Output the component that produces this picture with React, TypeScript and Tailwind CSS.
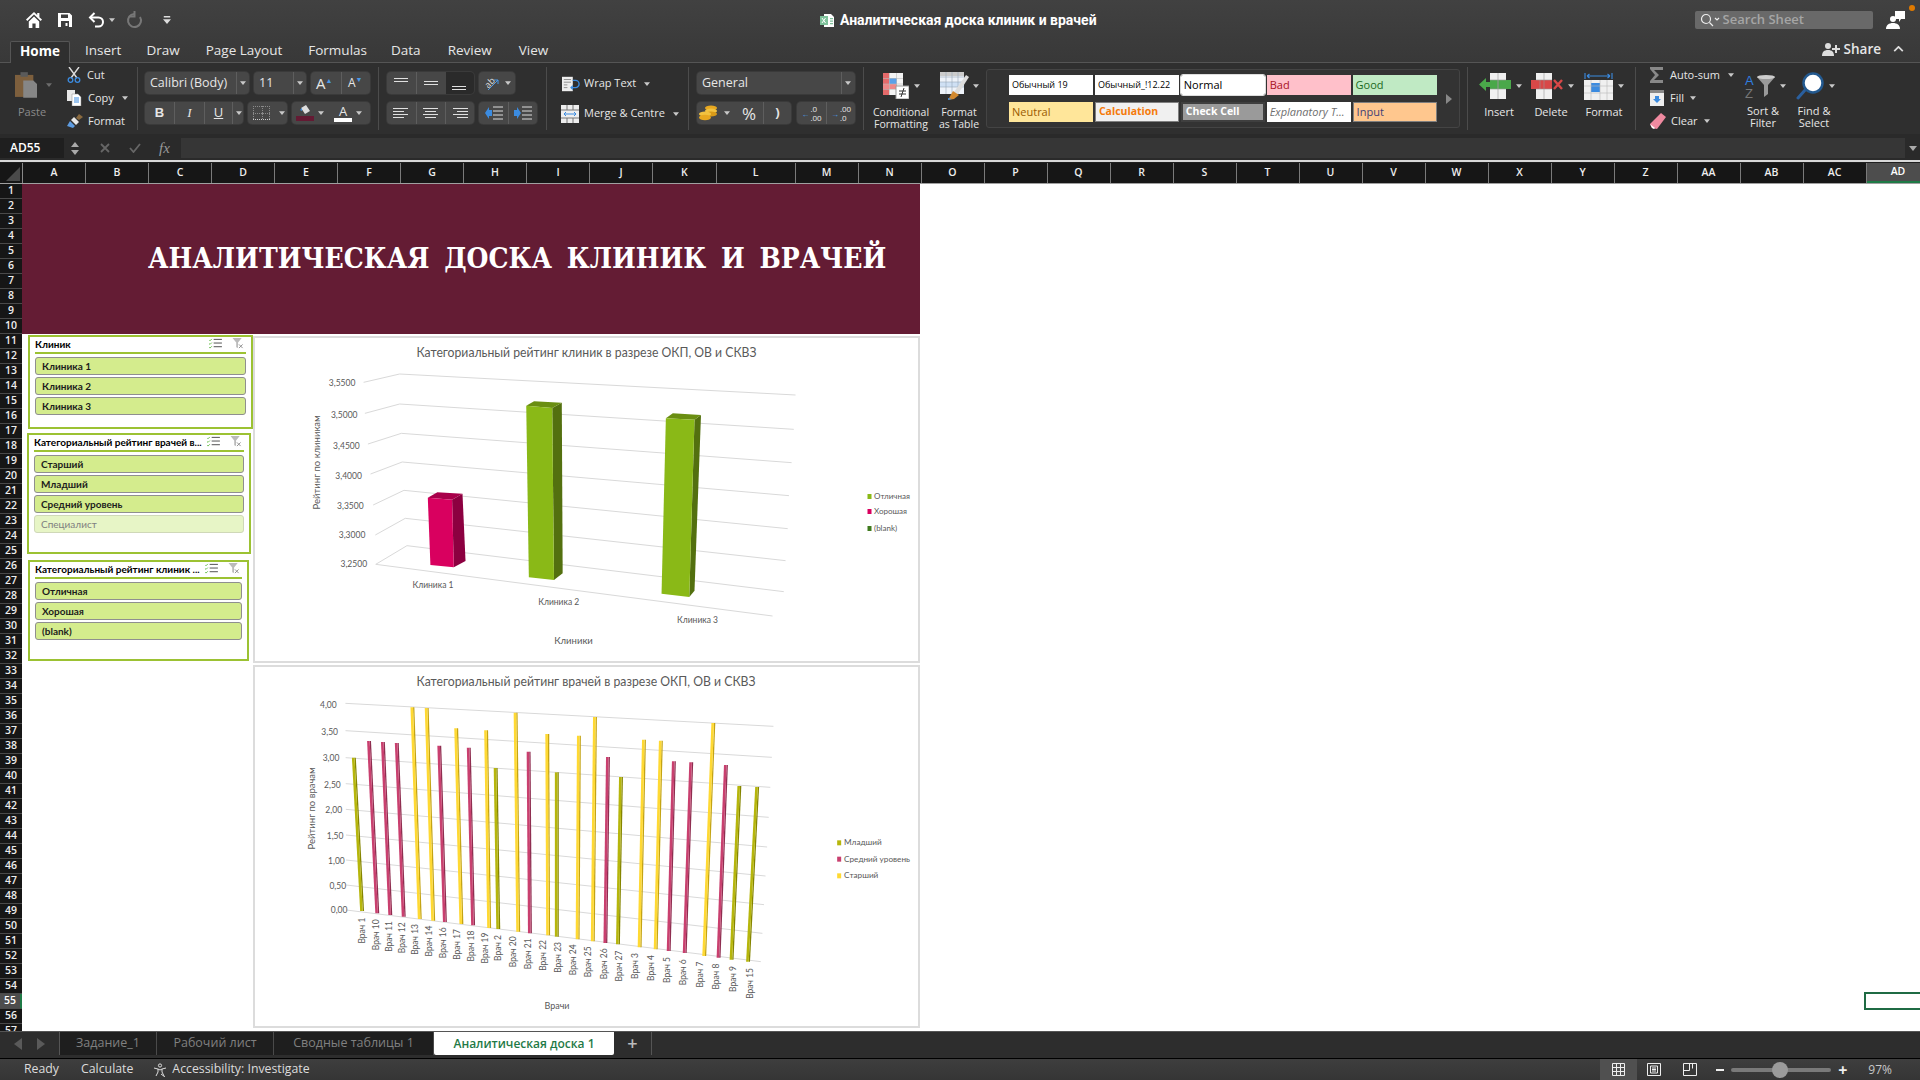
import React from "react";

const Caret = ({ className = "" }: { className?: string }) => (
  <svg viewBox="0 0 8 5" className={`h-[4px] w-[6px] shrink-0 ${className}`}>
    <path d="M0 0h8L4 5z" fill="#c8c8c8" />
  </svg>
);

const Sep = () => <div className="my-[4px] w-px shrink-0 bg-[#4c4c4c]" />;
const Div = () => <div className="h-full w-px shrink-0 bg-[#5e5e5e]" />;

const box = "flex h-[22px] items-center rounded-[4px] bg-[#474747] shadow-[0_0_0_1px_#3a3a3a]";

/* title bar icons */
const HomeIcon = () => (
  <svg viewBox="0 0 18 18" className="h-[18px] w-[18px]">
    <path d="M9 1 1 8.6l1.3 1.3L9 3.6l6.7 6.3L17 8.6l-2.6-2.4V2h-2.2v2.1z" fill="#fff" />
    <path d="M3.8 10.6 9 5.6l5.2 5V17h-3.6v-4.6H7.4V17H3.8z" fill="#fff" />
  </svg>
);
const SaveIcon = () => (
  <svg viewBox="0 0 16 16" className="h-[16px] w-[16px]">
    <path d="M1 1h11.5L15 3.5V15H1zM4 2.5V6h7V2.5zM4 9v6h8V9z" fill="#fff" fillRule="evenodd" />
    <path d="M8.5 11h2v3h-2z" fill="#fff" />
  </svg>
);
const UndoIcon = () => (
  <svg viewBox="0 0 18 18" className="h-[18px] w-[18px]" fill="none" stroke="#fff" strokeWidth="2">
    <path d="M2.5 6.5h8a4.5 4.5 0 0 1 0 9H7" />
    <path d="M6.5 2 2 6.5 6.5 11" />
  </svg>
);
const RedoIcon = () => (
  <svg viewBox="0 0 18 18" className="h-[18px] w-[18px]" fill="none" stroke="#777" strokeWidth="2">
    <path d="M8 3a6.500 6.500 0 1 0 6 3" />
    <path d="M8.500 0v5.500H3" />
  </svg>
);
const CustomizeIcon = () => (
  <svg viewBox="0 0 10 12" className="h-[12px] w-[8px]">
    <path d="M1 1h8v2H1zM0 5h10l-5 6z" fill="#ddd" />
  </svg>
);
const ExcelDoc = () => (
  <svg viewBox="0 0 15 15" className="h-[15px] w-[15px]">
    <path d="M4 1h7l3 3v10H4z" fill="#fff" />
    <path d="M0 3h8v9H0z" fill="#7fc29b" />
    <path d="M2 5l3.5 5M5.5 5 2 10" stroke="#fff" />
    <path d="M10 5h3v1.2h-3zM10 7.5h3v1.2h-3zM10 10h3v1.2h-3z" fill="#7fc29b" />
  </svg>
);
const SearchIcon = () => (
  <svg viewBox="0 0 20 14" className="h-[14px] w-[20px]" fill="none" stroke="#eee" strokeWidth="1.2">
    <circle cx="6" cy="6" r="4.5" />
    <path d="m9.5 9.5 3.5 3.5M15 5l2 2 2-2" />
  </svg>
);
const CommentsIcon = () => (
  <svg viewBox="0 0 20 20" className="h-[20px] w-[20px]">
    <path d="M9 1h10v8h-4l-2 3V9H9z" fill="#fff" />
    <circle cx="7" cy="9" r="3" fill="#fff" />
    <path d="M0 19c0-4 3-6 7-6s7 2 7 6z" fill="#fff" />
  </svg>
);
const ShareIcon = () => (
  <svg viewBox="0 0 18 14" className="h-[14px] w-[18px]">
    <circle cx="6" cy="4" r="3" fill="#ddd" />
    <path d="M0 14c0-4 2-6 6-6s6 2 6 6z" fill="#ddd" />
    <path d="M13 3h2v3h3v2h-3v3h-2V8h-3V6h3z" fill="#ddd" />
  </svg>
);

/* clipboard group */
const PasteIcon = () => (
  <svg viewBox="0 0 24 30" className="h-[30px] w-[24px]">
    <path d="M0 4h20v24H0z" fill="#7d5f3d" />
    <path d="M6 1h8v5H6z" fill="#5a5a5a" />
    <path d="M9 10h11l4 4v15H9z" fill="#868686" />
  </svg>
);
const CutIcon = () => (
  <svg viewBox="0 0 14 16" className="h-[16px] w-[14px]" fill="none">
    <path d="M2 0l8 11M12 0 4 11" stroke="#ddd" strokeWidth="1.4" />
    <circle cx="3.5" cy="13" r="2.3" stroke="#3b8be0" strokeWidth="1.3" />
    <circle cx="10.5" cy="13" r="2.3" stroke="#3b8be0" strokeWidth="1.3" />
  </svg>
);
const CopyIcon = () => (
  <svg viewBox="0 0 15 16" className="h-[16px] w-[15px]">
    <path d="M0 0h8v11H0z" fill="#e8e8e8" />
    <path d="M5 4h6l3 3v9H5z" fill="#fff" stroke="#888" strokeWidth=".5" />
    <path d="M7 8h5M7 10h5M7 12h5" stroke="#3b8be0" />
  </svg>
);
const BrushIcon = () => (
  <svg viewBox="0 0 16 14" className="h-[14px] w-[16px]">
    <path d="m9 4 3-4 4 3-4 3z" fill="#8a6a3f" />
    <path d="M7 3l5 5-3 3-5-5z" fill="#e8e8e8" />
    <path d="M3 7l5 5-2 2-6-2z" fill="#5d9be0" />
  </svg>
);

/* alignment lines */
const Lines = ({ w }: { w: number[] }) => (
  <div className="flex w-[16px] flex-col gap-[2px]">
    {w.map((v, i) => (
      <div key={i} className="h-px bg-[#e0e0e0]" style={{ width: v, marginLeft: 0 }} />
    ))}
  </div>
);
const CenterLines = ({ w, end }: { w: number[]; end?: boolean }) => (
  <div className={`flex w-[16px] flex-col gap-[2px] ${end ? "items-end" : "items-center"}`}>
    {w.map((v, i) => (
      <div key={i} className="h-px bg-[#e0e0e0]" style={{ width: v }} />
    ))}
  </div>
);
const IndentIcon = ({ flip }: { flip?: boolean }) => (
  <svg viewBox="0 0 18 14" className="h-[14px] w-[18px]">
    <path d="M8 1h10M8 5h10M8 9h10M8 13h10" stroke="#ddd" />
    <path d={flip ? "M0 4v6h3v3l4-6-4-6v3z" : "M7 4v6H4v3L0 7l4-6v3z"} fill="#3b8be0" />
  </svg>
);

const WrapIcon = () => (
  <svg viewBox="0 0 20 20" className="h-[18px] w-[20px]">
    <path d="M0 2h12v16H0z" fill="#eee" />
    <path d="M2 5h8M2 8h8M2 11h4M2 14h4" stroke="#888" />
    <path d="M12 6h3a3.5 3.5 0 0 1 0 8h-5" fill="none" stroke="#3b8be0" strokeWidth="1.5" />
    <path d="m12 11-3 3 3 3z" fill="#3b8be0" />
  </svg>
);
const MergeIcon = () => (
  <svg viewBox="0 0 18 18" className="h-[18px] w-[18px]">
    <path d="M0 0h18v18H0z" fill="#eee" />
    <path d="M0 5h18M0 13h18M6 0v5M12 0v5M6 13v5M12 13v5" stroke="#777" />
    <path d="M3 9h12M3 9l2-2M3 9l2 2M15 9l-2-2M15 9l-2 2" stroke="#3b8be0" fill="none" />
  </svg>
);
const CoinsIcon = () => (
  <svg viewBox="0 0 18 16" className="h-[16px] w-[18px]">
    <ellipse cx="12" cy="3" rx="6" ry="2.6" fill="#e8a820" />
    <ellipse cx="12" cy="6" rx="6" ry="2.6" fill="#f2c240" />
    <ellipse cx="12" cy="9" rx="6" ry="2.6" fill="#d89a18" />
    <ellipse cx="6" cy="9" rx="6" ry="2.6" fill="#f2c240" />
    <ellipse cx="6" cy="12.5" rx="6" ry="2.8" fill="#e8a820" />
  </svg>
);
const CondIcon = () => (
  <svg viewBox="0 0 26 26" className="h-[26px] w-[26px]">
    <path d="M0 0h20v22H0z" fill="#f4f4f4" />
    <path d="M0 0h6v22H0z" fill="#e46a6a" />
    <path d="M6 5h8v6H6z" fill="#5aa0e8" />
    <path d="M0 11h14v5H0z" fill="#e88" />
    <path d="M6.5 0v22M13.5 0v22M0 5.5h20M0 11h20M0 16.500h20" stroke="#bbb" strokeWidth=".6" />
    <path d="M13 13h13v13H13z" fill="#fff" stroke="#999" />
    <path d="M16 18h7M16 21h7M21 15l-3 9" stroke="#333" strokeWidth="1" />
  </svg>
);
const TableIcon = () => (
  <svg viewBox="0 0 30 28" className="h-[28px] w-[30px]">
    <path d="M0 0h24v22H0z" fill="#eef3fa" />
    <path d="M0 0h24v4H0z" fill="#ccc" />
    <path d="M0 10h24v5H0z" fill="#cfe0f4" />
    <path d="M6 0v22M12 0v22M18 0v22M0 5h24M0 10h24M0 15h24" stroke="#9ab" strokeWidth=".6" />
    <path d="m14 20 12-17 3 2-11 17z" fill="#ddd" />
    <path d="m13 19 6 4-5 4-6 1z" fill="#d2892f" />
    <path d="m8 26 4 1-4 1z" fill="#3b8be0" />
  </svg>
);
const InsertIcon = () => (
  <svg viewBox="0 0 32 26" className="h-[26px] w-[32px]">
    <path d="M11 0h16v26H11z" fill="#f0f0f0" />
    <path d="M11 7h21v9H11z" fill="#4aa84a" />
    <path d="M0 11.500 7 5v4h5v5H7v4z" fill="#4aa84a" />
    <path d="M19 0v26M11 7h16M11 16h16M19 7v9" stroke="#999" strokeWidth=".6" />
  </svg>
);
const DeleteIcon = () => (
  <svg viewBox="0 0 32 26" className="h-[26px] w-[32px]">
    <path d="M5 0h16v26H5z" fill="#f0f0f0" />
    <path d="M0 7h21v9H0z" fill="#d84848" />
    <path d="M13 0v26M5 7h16M5 16h16M9 7v9" stroke="#999" strokeWidth=".6" />
    <path d="m23 7 8 9M31 7l-8 9" stroke="#d84848" strokeWidth="2.4" />
  </svg>
);
const FormatIcon = () => (
  <svg viewBox="0 0 29 28" className="h-[28px] w-[29px]">
    <path d="M1 1v6M28 1v6M3 4h23M3 4l2.500-2M3 4l2.500 2M26 4l-2.500-2M26 4l-2.500 2" stroke="#3b8be0" strokeWidth="1.1" fill="none" />
    <path d="M0 8h29v20H0z" fill="#f0f0f0" />
    <path d="M7 11h9v9H7z" fill="#3b8be0" />
    <path d="M7 8v20M16 8v20M23 8v20M0 14h29M0 21h29" stroke="#bbb" strokeWidth=".6" />
  </svg>
);
const SigmaIcon = () => (
  <svg viewBox="0 0 14 16" className="h-[16px] w-[14px]">
    <path d="M0 0h13v3L4 3l5 5-5 5h9v3H0v-2l5-6-5-6z" fill="#888" />
  </svg>
);
const FillIcon = () => (
  <svg viewBox="0 0 14 16" className="h-[16px] w-[14px]">
    <path d="M0 0h14v16H0z" fill="#eee" />
    <path d="M0 0h14v3H0z" fill="#888" />
    <path d="M5 6h4v3h2l-4 4-4-4h2z" fill="#3b8be0" />
  </svg>
);
const EraserIcon = () => (
  <svg viewBox="0 0 16 16" className="h-[16px] w-[16px]">
    <path d="M11 0l5 4-9 12-5-1-2-4z" fill="#f08aa0" />
    <path d="M0 11l5 4-1 1-2-1z" fill="#fff" />
  </svg>
);
const FunnelIcon = () => (
  <svg viewBox="0 0 32 26" className="h-[26px] w-[32px] overflow-visible">
    <text x="0" y="12" fontSize="13" fill="#2f7ee0" fontFamily="Liberation Sans">A</text>
    <text x="0" y="25" fontSize="13" fill="#777" fontFamily="Liberation Sans">Z</text>
    <path d="M12 4h18l-7 8v9l-4 3V12z" fill="#9a9a9a" />
    <ellipse cx="21" cy="4" rx="9" ry="2" fill="#ccc" />
  </svg>
);
const LoupeIcon = () => (
  <svg viewBox="0 0 28 28" className="h-[28px] w-[28px]">
    <path d="M2 26 10 17" stroke="#2a5f9e" strokeWidth="3" strokeLinecap="round" />
    <circle cx="17" cy="11" r="9.500" fill="#fff" stroke="#23598f" strokeWidth="2.500" />
  </svg>
);

/* slicer icons */
const MultiIcon = () => (
  <svg viewBox="0 0 14 12" className="h-[11px] w-[13px]" fill="none">
    <path d="M0 2l1 1 2-2M0 6l1 1 2-2M0 10l1 1 2-2" stroke="#62bb46" />
    <path d="M5 1.500h9M5 5.500h9M5 9.500h9" stroke="#444" />
  </svg>
);
const ClearIcon = () => (
  <svg viewBox="0 0 13 12" className="h-[11px] w-[13px]">
    <path d="M0 0h10L6 5v6L4 10V5z" fill="#bbb" />
    <path d="M7 7l4 4M11 7l-4 4" stroke="#888" />
  </svg>
);

const chartFont = "font-['Lato','Liberation_Sans',sans-serif]";

type SlicerProps = {
  title: string;
  items: { label: string; off?: boolean }[];
  className: string;
};

const Slicer = ({ title, items, className }: SlicerProps) => (
  <div className={`border-2 border-[#9cc233] bg-white px-[5px] ${className} ${chartFont}`}>
    <div className="flex h-[17px] items-center justify-between border-b-2 border-[#9cc233] pb-[2px]">
      <span className="text-[10px] leading-none font-bold text-black">{title}</span>
      <div className="flex items-center gap-[10px] pr-[1px]">
        <MultiIcon />
        <ClearIcon />
      </div>
    </div>
    <div className="mt-[3px] flex flex-col gap-[2px]">
      {items.map((it) => (
        <div
          key={it.label}
          className={`flex h-[18px] items-center rounded-[3px] border pl-[6px] text-[10px] font-bold ${
            it.off
              ? "border-[#cfd8b8] bg-[#e7f5c6] font-normal text-[#808080]"
              : "border-[#8f8f8f] bg-[#d4ec8d] text-[#1c1c1c]"
          }`}
        >
          {it.label}
        </div>
      ))}
    </div>
  </div>
);

/* chart 1 */
const p1 = (pts: number[][]) => pts.map(([x, y]) => `${250 + x / 2.306},${330 + y / 3}`).join(" ");

const grid1 = [
  [[262, 157], [345, 132], [1258, 195]],
  [[265, 250], [345, 222], [1254, 298]],
  [[272, 342], [349, 310], [1249, 398]],
  [[278, 432], [351, 396], [1243, 497]],
  [[284, 525], [355, 481], [1240, 596]],
  [[289, 615], [358, 565], [1235, 692]],
  [[290, 703], [362, 647], [1231, 785]],
];
const ticks1 = [
  ["3,5500", 243, 158],
  ["3,5000", 248, 254],
  ["3,4500", 253, 347],
  ["3,4000", 258, 437],
  ["3,3500", 262, 527],
  ["3,3000", 266, 614],
  ["3,2500", 270, 702],
] as const;
const bars1 = [
  {
    c: ["#d9005f", "#8c0040", "#a8004a"],
    front: [[410, 503], [466, 509], [470, 712], [416, 705]],
    side: [[466, 509], [490, 491], [497, 693], [470, 712]],
    top: [[410, 503], [432, 487], [490, 491], [466, 509]],
  },
  {
    c: ["#8ab917", "#53700f", "#6a8e12"],
    front: [[637, 227], [697, 234], [701, 750], [643, 742]],
    side: [[697, 234], [719, 218], [721, 730], [701, 750]],
    top: [[637, 227], [655, 214], [719, 218], [697, 234]],
  },
  {
    c: ["#8ab917", "#53700f", "#6a8e12"],
    front: [[959, 265], [1025, 269], [1013, 801], [949, 791]],
    side: [[1025, 269], [1040, 255], [1025, 782], [1013, 801]],
    top: [[959, 265], [975, 250], [1040, 255], [1025, 269]],
  },
];

const ChartClinics = () => {
  const x = (v: number) => 250 + v / 2.306;
  const y = (v: number) => 330 + v / 3;
  return (
    <svg viewBox="255 338 663 323" className={`h-full w-full ${chartFont}`} fill="#595959">
      <text x={x(776)} y={y(65) + 5} fontSize="13.5" textAnchor="middle" textLength={340} lengthAdjust="spacingAndGlyphs">
        Категориальный рейтинг клиник в разрезе ОКП, ОВ и СКВЗ
      </text>
      {grid1.map((g, i) => (
        <polyline key={i} points={p1(g)} fill="none" stroke="#d9d9d9" />
      ))}
      <polyline points={p1([[290, 703], [1205, 858]])} fill="none" stroke="#d9d9d9" />
      {ticks1.map(([t, tx, ty]) => (
        <text key={t} x={x(tx)} y={y(ty) + 3} fontSize="8.5" textAnchor="end">
          {t}
        </text>
      ))}
      {bars1.map((b, i) => (
        <g key={i}>
          <polygon points={p1(b.side)} fill={b.c[1]} />
          <polygon points={p1(b.top)} fill={b.c[2]} />
          <polygon points={p1(b.front)} fill={b.c[0]} />
        </g>
      ))}
      <text x={x(422)} y={y(765) + 3} fontSize="8.5" textAnchor="middle">Клиника 1</text>
      <text x={x(712)} y={y(816) + 3} fontSize="8.5" textAnchor="middle">Клиника 2</text>
      <text x={x(1032)} y={y(870) + 3} fontSize="8.5" textAnchor="middle">Клиника 3</text>
      <text x={x(746)} y={y(933) + 3} fontSize="9.5" textAnchor="middle">Клиники</text>
      <text
        transform={`translate(${x(155)} ${y(397)}) rotate(-90)`}
        fontSize="9.5"
        textAnchor="middle"
        dy="3"
      >
        Рейтинг по клиникам
      </text>
      {[
        ["Отличная", "#8ab917", 496],
        ["Хорошая", "#d9005f", 511],
        ["(blank)", "#3f7a1d", 528],
      ].map(([t, c, ly]) => (
        <g key={t as string}>
          <rect x={867.500} y={(ly as number) - 2} width="4" height="5" fill={c as string} />
          <text x={874} y={(ly as number) + 3} fontSize="8">{t}</text>
        </g>
      ))}
    </svg>
  );
};

/* chart 2 */
const OL = ["#b6b60c", "#858500"];
const PK = ["#c9406f", "#8f2e50"];
const YL = ["#ffd933", "#c4a414"];
const bars2: [string, number, number, number, number, string[], number, number][] = [
  ["Врач 1", 239, 278, 258, 738, OL, 259, 758],
  ["Врач 10", 274, 228, 293, 745, PK, 290, 763],
  ["Врач 11", 306, 231, 323, 750, PK, 320, 768],
  ["Врач 12", 338, 234, 354, 755, PK, 350, 772],
  ["Врач 13", 374, 127, 391, 762, YL, 381, 777],
  ["Врач 14", 407, 129, 422, 767, YL, 413, 782],
  ["Врач 16", 436, 242, 449, 771, PK, 445, 787],
  ["Врач 17", 475, 190, 487, 777, YL, 477, 792],
  ["Врач 18", 504, 248, 514, 781, PK, 510, 797],
  ["Врач 19", 544, 196, 551, 789, YL, 542, 803],
  ["Врач 2", 566, 309, 572, 792, OL, 573, 810],
  ["Врач 20", 612, 143, 618, 800, YL, 607, 814],
  ["Врач 21", 642, 260, 645, 805, PK, 642, 820],
  ["Врач 22", 685, 207, 687, 811, YL, 676, 825],
  ["Врач 23", 707, 322, 707, 815, OL, 711, 831],
  ["Врач 24", 758, 212, 755, 823, YL, 745, 838],
  ["Врач 25", 795, 156, 790, 829, YL, 780, 844],
  ["Врач 26", 825, 276, 819, 834, PK, 816, 850],
  ["Врач 27", 855, 336, 848, 838, OL, 852, 857],
  ["Врач 3", 908, 224, 898, 847, YL, 888, 864],
  ["Врач 4", 947, 227, 935, 853, YL, 925, 870],
  ["Врач 5", 977, 289, 965, 858, PK, 962, 876],
  ["Врач 6", 1017, 292, 1002, 864, PK, 999, 883],
  ["Врач 7", 1068, 174, 1047, 873, YL, 1037, 890],
  ["Врач 8", 1097, 300, 1080, 878, PK, 1075, 896],
  ["Врач 9", 1128, 363, 1110, 884, OL, 1114, 903],
  ["Врач 15", 1169, 366, 1148, 890, OL, 1153, 909],
];
const gridL = [115, 197, 278, 356, 433, 510, 585, 660, 735];
const gridR = [184, 277, 367, 457, 546, 633, 719, 805, 890];
const tick2 = ["4,00", "3,50", "3,00", "2,50", "2,00", "1,50", "1,00", "0,50", "0,00"];
const tickY = [120, 200, 279, 360, 435, 512, 587, 662, 735];

const ChartDoctors = () => {
  const x = (v: number) => 250 + v / 2.306;
  const y = (v: number) => 665 + v / 3;
  return (
    <svg viewBox="255 667 663 359" className={`h-full w-full ${chartFont}`} fill="#595959">
      <text x={x(775)} y={y(47) + 5} fontSize="13.5" textAnchor="middle" textLength={339} lengthAdjust="spacingAndGlyphs">
        Категориальный рейтинг врачей в разрезе ОКП, ОВ и СКВЗ
      </text>
      {gridL.map((l, i) => (
        <line
          key={i}
          x1={x(220 + i / 4)}
          y1={y(l)}
          x2={x(1207 - (29 * i) / 8)}
          y2={y(gridR[i])}
          stroke="#d9d9d9"
        />
      ))}
      {tick2.map((t, i) => (
        <text key={t} x={x(200 + i * 3.1)} y={y(tickY[i]) + 3} fontSize="8.5" textAnchor="end">
          {t}
        </text>
      ))}
      {bars2.map(([name, tx, ty, bx, by, c, lx, ly]) => (
        <g key={name}>
          <polygon
            points={`${x(tx + 2)},${y(ty)} ${x(tx + 5)},${y(ty)} ${x(bx + 5)},${y(by)} ${x(bx + 2)},${y(by)}`}
            fill={c[1]}
          />
          <polygon
            points={`${x(tx - 4)},${y(ty)} ${x(tx + 2)},${y(ty)} ${x(bx + 2)},${y(by)} ${x(bx - 4)},${y(by)}`}
            fill={c[0]}
          />
          <text
            transform={`translate(${x(lx) + 3} ${y(ly)}) rotate(-90)`}
            fontSize="8.5"
            textAnchor="end"
          >
            {name}
          </text>
        </g>
      ))}
      <text x={x(708)} y={y(1022) + 3} fontSize="9" textAnchor="middle">Врачи</text>
      <text
        transform={`translate(${x(143)} ${y(430)}) rotate(-90)`}
        fontSize="9.5"
        textAnchor="middle"
        dy="3"
      >
        Рейтинг по врачам
      </text>
      {[
        ["Младший", OL[0], 532],
        ["Средний уровень", PK[0], 581],
        ["Старший", YL[0], 631],
      ].map(([t, c, ly]) => (
        <g key={t as string}>
          <rect x={x(1354)} y={y(ly as number) - 2} width="4" height="5" fill={c as string} />
          <text x={x(1370)} y={y(ly as number) + 3} fontSize="8.2">{t}</text>
        </g>
      ))}
    </svg>
  );
};

/* sheet */
const cols: [string, number][] = [
  ["A", 63], ["B", 63], ["C", 63], ["D", 63], ["E", 63], ["F", 63], ["G", 63], ["H", 63],
  ["I", 63], ["J", 63], ["K", 63.5], ["L", 79], ["M", 63], ["N", 63], ["O", 63], ["P", 63],
  ["Q", 63], ["R", 63], ["S", 63], ["T", 63], ["U", 63], ["V", 63], ["W", 63], ["X", 63],
  ["Y", 63], ["Z", 63], ["AA", 63], ["AB", 63], ["AC", 63], ["AD", 54],
];
const rows = Array.from({ length: 57 }, (_, i) => i + 1);

const styleCells = [
  { t: "Обычный 19", c: "bg-white text-black text-[9px]" },
  { t: "Обычный_!12.22", c: "bg-white text-black text-[9px]" },
  { t: "Normal", c: "bg-white text-black text-[11px] outline outline-1 outline-[#ddd] rounded-[2px]" },
  { t: "Bad", c: "bg-[#ffc0ca] text-[#a8121f] text-[11px]" },
  { t: "Good", c: "bg-[#c0eac4] text-[#1c6a22] text-[11px]" },
  { t: "Neutral", c: "bg-[#ffe69a] text-[#9a5a00] text-[11px]" },
  { t: "Calculation", c: "bg-[#f0f0f0] text-[#f57a0a] text-[10.500px] font-bold border border-[#7f7f7f]" },
  { t: "Check Cell", c: "bg-[#9a9a9a] text-white text-[10.500px] font-bold border-2 border-double border-[#3f3f3f]" },
  { t: "Explanatory T...", c: "bg-white text-[#6e6e6e] text-[11px] italic" },
  { t: "Input", c: "bg-[#ffc78e] text-[#3f3f76] text-[11px] border border-[#7f7f7f]" },
];

export default function App() {
  return (
    <div className="flex h-[1080px] w-[1920px] flex-col overflow-hidden bg-[#2f2f2f] font-['Open_Sans',sans-serif] text-[#e6e6e6]">
      {/* title bar */}
      <div className="bg-gradient-to-b from-[#414141] to-[#383838]">
        <div className="relative flex h-[40px] items-center">
          <div className="flex items-center pl-[25px]">
            <HomeIcon />
            <div className="ml-[14px]"><SaveIcon /></div>
            <div className="ml-[15px]"><UndoIcon /></div>
            <Caret className="ml-[3px]" />
            <div className="ml-[11px]"><RedoIcon /></div>
            <div className="ml-[19px]"><CustomizeIcon /></div>
          </div>
          <div className="ml-[649px] flex items-center gap-[5px]">
            <ExcelDoc />
            <span className="font-['Roboto',sans-serif] text-[14px] font-bold whitespace-nowrap text-white">
              Аналитическая доска клиник и врачей
            </span>
          </div>
          <div className="ml-[598px] flex h-[18px] w-[178px] items-center rounded-[2px] bg-[#696969] pl-[5px] text-[13px] font-semibold text-[#a5a5a5]">
            <SearchIcon />
            <span className="ml-[3px]">Search Sheet</span>
          </div>
          <div className="ml-[13px]"><CommentsIcon /></div>
          <div className="absolute top-[5px] right-[5px] h-[6px] w-[6px] rounded-full bg-[#e07a00]" />
        </div>
        {/* tabs */}
        <div className="flex h-[23px] items-end border-b border-[#555] pl-[10px] text-[13.500px] font-medium">
          <div className="-mb-px flex h-[22px] w-[60px] items-center justify-center rounded-t-[2px] border border-b-0 border-[#555] bg-[#2f2f2f] pb-[2px] font-bold text-white">
            Home
          </div>
          {[
            ["Insert", 15],
            ["Draw", 25],
            ["Page Layout", 26],
            ["Formulas", 26],
            ["Data", 24],
            ["Review", 27],
            ["View", 27],
          ].map(([t, m]) => (
            <div key={t as string} className="flex h-[22px] items-center pb-[1px]" style={{ marginLeft: m as number }}>
              {t}
            </div>
          ))}
          <div className="mb-[3px] ml-auto flex items-center pr-[16px]">
            <ShareIcon />
            <span className="ml-[4px] text-[13.500px] font-semibold">Share</span>
            <svg viewBox="0 0 12 7" className="ml-[12px] h-[6px] w-[11px]" fill="none" stroke="#ddd" strokeWidth="2">
              <path d="m1 6 5-5 5 5" />
            </svg>
          </div>
        </div>
      </div>

      {/* ribbon */}
      <div className="flex h-[71px] bg-[#2f2f2f] text-[11px]">
        {/* clipboard */}
        <div className="flex w-[137px] pl-[15px]">
          <div className="flex w-[37px] flex-col pt-[7px]">
            <div className="flex items-center">
              <PasteIcon />
              <Caret className="ml-[9px] opacity-40" />
            </div>
            <span className="mt-[4px] pl-[3px] text-[#8a8a8a]">Paste</span>
          </div>
          <div className="ml-[15px] flex flex-col gap-[5px] pt-[3px]">
            <div className="flex h-[18px] items-center">
              <CutIcon /><span className="ml-[6px]">Cut</span>
            </div>
            <div className="flex h-[18px] items-center">
              <CopyIcon /><span className="ml-[6px]">Copy</span><Caret className="ml-[8px]" />
            </div>
            <div className="flex h-[18px] items-center">
              <BrushIcon /><span className="ml-[5px]">Format</span>
            </div>
          </div>
        </div>
        <Sep />
        {/* font */}
        <div className="flex w-[240px] flex-col gap-[8px] pt-[9px] pl-[7px]">
          <div className="flex gap-[5px]">
            <div className={`${box} w-[104px] pl-[5px] text-[12.500px]`}>
              <span className="w-[86px]">Calibri (Body)</span><Div /><Caret className="ml-[3px]" />
            </div>
            <div className={`${box} w-[52px] pl-[5px] text-[12.500px]`}>
              <span className="w-[34px]">11</span><Div /><Caret className="ml-[3px]" />
            </div>
            <div className={`${box} w-[59px]`}>
              <span className="w-[30px] pl-[5px] text-[15px]">A<span className="align-super text-[7px] text-[#4a9ae8]">▲</span></span>
              <Div />
              <span className="pl-[6px] text-[12px]">A<span className="align-super text-[7px] text-[#4a9ae8]">▼</span></span>
            </div>
          </div>
          <div className="flex gap-[5px]">
            <div className={`${box} w-[98px] text-[13px]`}>
              <span className="w-[29px] text-center font-['Liberation_Sans'] font-bold">B</span><Div />
              <span className="w-[29px] text-center font-['Liberation_Serif'] italic">I</span><Div />
              <span className="w-[27px] text-center underline">U</span><Div />
              <Caret className="ml-[3px]" />
            </div>
            <div className={`${box} w-[39px]`}>
              <div className="ml-[5px] grid h-[14px] w-[17px] grid-cols-2 grid-rows-2 border-b border-dotted border-[#8a8a8a] border-b-[#ccc]">
                <div className="border-t border-l border-dotted border-[#8a8a8a]" />
                <div className="border-t border-r border-l border-dotted border-[#8a8a8a]" />
                <div className="border-t border-l border-dotted border-[#8a8a8a]" />
                <div className="border-t border-r border-l border-dotted border-[#8a8a8a]" />
              </div>
              <div className="ml-[6px]"><Div /></div>
              <Caret className="ml-[2px]" />
            </div>
            <div className={`${box} w-[78px]`}>
              <div className="ml-[4px] flex w-[18px] flex-col items-center">
                <svg viewBox="0 0 12 11" className="h-[11px] w-[12px]">
                  <path d="m2 3 5-3 4 6-5 3z" fill="#ddd" />
                  <path d="m1 5 2-2v3z" fill="#3b8be0" />
                </svg>
                <div className="h-[5px] w-[18px] bg-[#641a33]" />
              </div>
              <Caret className="ml-[4px]" />
              <div className="ml-[4px]"><Div /></div>
              <div className="ml-[5px] flex w-[18px] flex-col items-center text-[13px] leading-[13px]">
                A
                <div className="h-[4px] w-[18px] bg-white" />
              </div>
              <Caret className="ml-[4px]" />
            </div>
          </div>
        </div>
        <Sep />
        {/* alignment */}
        <div className="flex w-[167px] flex-col gap-[8px] pt-[9px] pl-[8px]">
          <div className="flex gap-[5px]">
            <div className={`${box} w-[87px] overflow-hidden`}>
              <div className="flex h-full w-[29px] justify-center pt-[6px]"><Lines w={[14, 14]} /></div>
              <Div />
              <div className="flex h-full w-[29px] items-center justify-center"><Lines w={[14, 14]} /></div>
              <div className="flex h-full flex-1 justify-center bg-[#2a2a2a] pt-[14px]"><Lines w={[14, 14]} /></div>
            </div>
            <div className={`${box} w-[36px] pl-[6px]`}>
              <svg viewBox="0 0 16 16" className="h-[16px] w-[16px] overflow-visible">
                <text x="0" y="10" fontSize="9" fill="#ddd" transform="rotate(-45 6 8)" fontFamily="Open Sans">ab</text>
                <path d="m3 15 10-10m-4 0h4v4" stroke="#4a9ae8" fill="none" />
              </svg>
              <Caret className="ml-[4px]" />
            </div>
          </div>
          <div className="flex gap-[5px]">
            <div className={`${box} w-[87px]`}>
              <div className="flex w-[29px] justify-center"><Lines w={[15, 11, 15, 11]} /></div><Div />
              <div className="flex w-[29px] justify-center"><CenterLines w={[15, 11, 15, 11]} /></div><Div />
              <div className="flex w-[28px] justify-center"><CenterLines w={[15, 11, 15, 11]} end /></div>
            </div>
            <div className={`${box} w-[58px]`}>
              <div className="flex w-[29px] justify-center"><IndentIcon /></div><Div />
              <div className="flex w-[28px] justify-center"><IndentIcon flip /></div>
            </div>
          </div>
        </div>
        <Sep />
        {/* wrap + merge */}
        <div className="flex w-[141px] flex-col gap-[11px] pt-[11px] pl-[14px]">
          <div className="flex h-[19px] items-center">
            <WrapIcon /><span className="ml-[3px] whitespace-nowrap">Wrap Text</span><Caret className="ml-[8px]" />
          </div>
          <div className="flex h-[19px] items-center">
            <MergeIcon /><span className="ml-[5px] whitespace-nowrap">Merge &amp; Centre</span><Caret className="ml-[8px]" />
          </div>
        </div>
        <Sep />
        {/* number */}
        <div className="flex w-[174px] flex-col gap-[8px] pt-[9px] pl-[8px]">
          <div className={`${box} w-[158px] pl-[5px] text-[12.500px]`}>
            <span className="w-[139px]">General</span><Div /><Caret className="ml-[3px]" />
          </div>
          <div className="flex gap-[6px]">
            <div className={`${box} w-[94px]`}>
              <div className="flex w-[20px] items-center justify-end"><CoinsIcon /></div>
              <Caret className="ml-[7px]" />
              <div className="ml-[4px]"><Div /></div>
              <span className="w-[28px] text-center text-[17px] leading-none">%</span><Div />
              <span className="flex-1 text-center text-[13px] font-bold">)</span>
            </div>
            <div className={`${box} w-[58px] text-[8px] leading-[9px]`}>
              <div className="flex w-[29px] items-center justify-center gap-[1px]"><span className="text-[#4a9ae8]">←</span><div>.0<br />.00</div></div><Div />
              <div className="flex flex-1 items-center justify-center gap-[1px]"><span className="text-[#4a9ae8]">→</span><div>.00<br />.0</div></div>
            </div>
          </div>
        </div>
        <Sep />
        {/* styles */}
        <div className="flex w-[122px] pl-[9px] text-[10.500px]">
          <div className="flex w-[56px] flex-col items-center pt-[9px]">
            <div className="flex h-[28px] items-center"><CondIcon /><Caret className="ml-[5px]" /></div>
            <span className="mt-[6px] text-center leading-[12px]">Conditional<br />Formatting</span>
          </div>
          <div className="ml-[6px] flex w-[48px] flex-col items-center pt-[9px]">
            <div className="flex h-[28px] items-center"><TableIcon /><Caret className="ml-[3px]" /></div>
            <span className="mt-[6px] text-center leading-[12px] whitespace-nowrap">Format<br />as Table</span>
          </div>
        </div>
        <div className="my-[6px] flex w-[474px] items-center rounded-[3px] border border-[#444] bg-[#333] pl-[22px]">
          <div className="grid w-[428px] grid-cols-5 gap-x-[1.500px] gap-y-[7px]">
            {styleCells.map((s) => (
              <div key={s.t} className={`flex h-[20px] items-center overflow-hidden pb-[1px] pl-[3px] leading-none whitespace-nowrap ${s.c}`}>
                {s.t}
              </div>
            ))}
          </div>
          <svg viewBox="0 0 6 10" className="ml-[9px] h-[10px] w-[6px]"><path d="M0 0l6 5-6 5z" fill="#888" /></svg>
        </div>
        <div className="w-[7px]" />
        <Sep />
        {/* cells */}
        <div className="flex w-[167px] pl-[11px]">
          {[
            [<InsertIcon key="i" />, "Insert", 52],
            [<DeleteIcon key="d" />, "Delete", 53],
            [<FormatIcon key="f" />, "Format", 48],
          ].map(([ic, t, w]) => (
            <div key={t as string} className="flex flex-col pt-[9px]" style={{ width: w as number }}>
              <div className="flex h-[28px] items-center">{ic}<Caret className="ml-[5px]" /></div>
              <span className="mt-[4px] w-[40px] text-center">{t}</span>
            </div>
          ))}
        </div>
        <Sep />
        {/* editing */}
        <div className="flex pl-[14px]">
          <div className="flex w-[95px] flex-col gap-[5px] pt-[3px]">
            <div className="flex h-[18px] items-center"><SigmaIcon /><span className="ml-[6px]">Auto-sum</span><Caret className="ml-[8px]" /></div>
            <div className="flex h-[18px] items-center"><FillIcon /><span className="ml-[6px]">Fill</span><Caret className="ml-[6px]" /></div>
            <div className="flex h-[18px] items-center"><EraserIcon /><span className="ml-[5px]">Clear</span><Caret className="ml-[6px]" /></div>
          </div>
          <div className="flex w-[51px] flex-col pt-[9px]">
            <div className="flex h-[28px] items-center"><FunnelIcon /><Caret className="ml-[3px]" /></div>
            <span className="mt-[5px] w-[36px] text-center leading-[12px]">Sort &amp;<br />Filter</span>
          </div>
          <div className="flex flex-col pt-[9px]">
            <div className="flex h-[28px] items-center"><LoupeIcon /><Caret className="ml-[5px]" /></div>
            <span className="mt-[5px] w-[36px] text-center leading-[12px]">Find &amp;<br />Select</span>
          </div>
        </div>
      </div>

      {/* formula bar */}
      <div className="flex h-[26px] bg-[#2a2a2a] pt-[4px] pb-[2px]">
        <div className="flex h-[20px] w-[64px] items-center bg-[#1f1f1f] pl-[10px] text-[12px] font-semibold text-white">AD55</div>
        <div className="flex h-[20px] w-[22px] flex-col items-center justify-center gap-[3px]">
          <svg viewBox="0 0 8 5" className="h-[5px] w-[8px]"><path d="M0 5h8L4 0z" fill="#aaa" /></svg>
          <svg viewBox="0 0 8 5" className="h-[5px] w-[8px]"><path d="M0 0h8L4 5z" fill="#aaa" /></svg>
        </div>
        <div className="flex h-[20px] w-[95px] items-center pl-[14px]">
          <svg viewBox="0 0 10 10" className="h-[10px] w-[10px]" fill="none" stroke="#666" strokeWidth="1.8"><path d="m1 1 8 8M9 1 1 9" /></svg>
          <svg viewBox="0 0 12 10" className="ml-[19px] h-[10px] w-[12px]" fill="none" stroke="#666" strokeWidth="1.8"><path d="m1 5 3.500 4L11 1" /></svg>
          <span className="ml-[18px] font-['Liberation_Serif'] text-[15px] text-[#999] italic">fx</span>
        </div>
        <div className="h-[20px] w-[1724px] bg-[#363636]" />
        <div className="flex h-[20px] flex-1 items-center justify-center">
          <svg viewBox="0 0 8 5" className="h-[5px] w-[8px]"><path d="M0 0h8L4 5z" fill="#aaa" /></svg>
        </div>
      </div>
      <div className="h-[2px] shrink-0 bg-[#d8d8d8]" />
      <div className="h-px shrink-0 bg-[#1f1f1f]" />

      {/* column headers */}
      <div className="flex h-[21px] shrink-0 border-b border-[#a0a0a0] bg-[#161616] text-[10.500px] font-semibold">
        <div className="flex w-[23px] shrink-0 items-end justify-end border-r border-[#888] pr-[2px] pb-[2px]">
          <svg viewBox="0 0 14 14" className="h-[14px] w-[14px]"><path d="M14 0v14H0z" fill="#4a4a4a" /></svg>
        </div>
        {cols.map(([c, w]) => (
          <div
            key={c}
            className={`flex shrink-0 items-center justify-center ${
              c === "AD" ? "border-b-2 border-[#1f7a46] bg-[#4d4d4d] pl-[9px] text-white" : "border-r border-[#7a7a7a] text-[#eee]"
            }`}
            style={{ width: w }}
          >
            {c}
          </div>
        ))}
      </div>

      {/* sheet */}
      <div className="flex h-[847px] shrink-0 overflow-hidden">
        <div className="w-[22px] shrink-0 bg-[#161616]">
          {rows.map((r) => (
            <div
              key={r}
              className={`flex h-[15px] items-center justify-center border-b border-[#4a4a4a] text-[10.500px] font-semibold ${
                r === 55 ? "border-r-2 border-r-[#1f7a46] bg-[#4d4d4d] text-white" : "text-[#eee]"
              }`}
            >
              {r}
            </div>
          ))}
        </div>
        <div className="relative flex-1 bg-white">
          <div className="flex h-[150px] w-[898px] items-center bg-[#641c34] pl-[126px]">
            <h1 className="font-['DejaVu_Serif_Condensed','DejaVu_Serif',serif] text-[28px] font-bold whitespace-nowrap text-white [word-spacing:6px]">
              АНАЛИТИЧЕСКАЯ ДОСКА КЛИНИК И ВРАЧЕЙ
            </h1>
          </div>
          <div className="flex">
            <div className="flex w-[231px] flex-col pt-[1px]">
              <Slicer
                title="Клиник"
                className="ml-[6px] h-[94px] w-[225px]"
                items={[{ label: "Клиника 1" }, { label: "Клиника 2" }, { label: "Клиника 3" }]}
              />
              <Slicer
                title="Категориальный рейтинг врачей в..."
                className="mt-[4px] ml-[5px] h-[121px] w-[224px]"
                items={[
                  { label: "Старший" },
                  { label: "Младший" },
                  { label: "Средний уровень" },
                  { label: "Специалист", off: true },
                ]}
              />
              <Slicer
                title="Категориальный рейтинг клиник ..."
                className="mt-[6px] ml-[6px] h-[101px] w-[221px]"
                items={[{ label: "Отличная" }, { label: "Хорошая" }, { label: "(blank)" }]}
              />
            </div>
            <div className="w-[667px] pt-[2px]">
              <div className="h-[327px] border-2 border-[#dcdcdc] bg-white">
                <ChartClinics />
              </div>
              <div className="mt-[2px] h-[363px] border-2 border-[#dcdcdc] bg-white">
                <ChartDoctors />
              </div>
            </div>
          </div>
          {/* selected cell AD55 */}
          <div className="absolute top-[808px] right-0 h-[18px] w-[56px] border-2 border-r-0 border-[#1f6b44]" />
        </div>
      </div>

      {/* sheet tabs */}
      <div className="flex h-[27px] shrink-0 border-t border-[#555] bg-[#2d2d2d] text-[12.500px] text-[#808080]">
        <div className="flex h-[23px] w-[60px] items-center gap-[15px] border-r border-[#555] pl-[14px]">
          <svg viewBox="0 0 8 12" className="h-[12px] w-[8px]"><path d="M8 0v12L0 6z" fill="#5a5a5a" /></svg>
          <svg viewBox="0 0 8 12" className="h-[12px] w-[8px]"><path d="M0 0v12l8-6z" fill="#5a5a5a" /></svg>
        </div>
        {[
          ["Задание_1", 97],
          ["Рабочий лист", 117],
          ["Сводные таблицы 1", 160],
        ].map(([t, w]) => (
          <div key={t as string} className="flex h-[23px] items-center justify-center border-r border-[#4a4a4a] bg-[#1e1e1e] whitespace-nowrap" style={{ width: w as number }}>
            {t}
          </div>
        ))}
        <div className="flex h-[23px] w-[180px] items-center justify-center rounded-b-[2px] bg-white text-[12px] font-semibold text-[#1f7a46]">
          Аналитическая доска 1
        </div>
        <div className="flex h-[23px] w-[38px] items-center justify-center border-r border-[#555] text-[18px] font-semibold text-[#bbb]">+</div>
      </div>

      {/* status bar */}
      <div className="flex h-[22px] shrink-0 items-center border-t border-black bg-gradient-to-b from-[#3e3e3e] to-[#353535] text-[12.300px] text-[#dcdcdc]">
        <span className="ml-[24px]">Ready</span>
        <span className="ml-[22px]">Calculate</span>
        <svg viewBox="0 0 14 14" className="ml-[20px] h-[14px] w-[14px]" fill="none" stroke="#ddd">
          <circle cx="7" cy="2.500" r="1.600" />
          <path d="M1 5l4 1 2 1 2-1 4-1M5 6v3l-2 4M9 6v3l2 4M8 11l4 3" />
        </svg>
        <span className="ml-[5px]">Accessibility: Investigate</span>
        <div className="ml-auto flex h-full w-[37px] items-center justify-center bg-[#505050]">
          <svg viewBox="0 0 13 13" className="h-[13px] w-[13px]" fill="none" stroke="#eee"><path d="M.500.500h12v12H.500zM4.500.500v12M8.500.500v12M.500 4.500h12M.500 8.500h12" /></svg>
        </div>
        <svg viewBox="0 0 14 13" className="ml-[10px] h-[13px] w-[14px]" fill="none" stroke="#eee"><path d="M.500.500h13v12H.500z" /><path d="M3.500 3h7v7h-7zM5 5h4M5 6.500h4M5 8h4" /></svg>
        <svg viewBox="0 0 14 13" className="ml-[22px] h-[13px] w-[14px]" fill="none" stroke="#eee"><path d="M.500.500h13v12H.500zM.500 7.500h6v-7M9.500.500v5" /></svg>
        <div className="ml-[19px] h-[2px] w-[8px] bg-[#eee]" />
        <div className="relative ml-[7px] h-[4px] w-[100px] rounded-full bg-[#7a7a7a]">
          <div className="absolute top-[-6px] left-[41px] h-[16px] w-[16px] rounded-full bg-[#9b9b9b]" />
        </div>
        <span className="ml-[7px] text-[16px] leading-none font-bold text-[#eee]">+</span>
        <span className="mr-[28px] ml-[21px] text-[12px] text-[#c8c8c8]">97%</span>
      </div>
    </div>
  );
}
